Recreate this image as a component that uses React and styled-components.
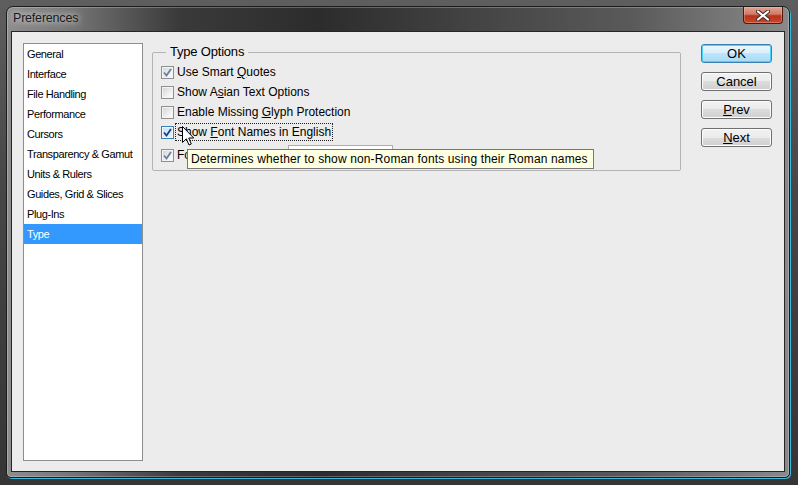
import React from "react";
import styled, { createGlobalStyle } from "styled-components";

const GlobalStyle = createGlobalStyle`
  body {
    margin: 0;
    background: #3c3c3c;
    font-family: "Liberation Sans", Arial, sans-serif;
  }
`;

const Screen = styled.div`
  width: 798px;
  height: 485px;
  box-sizing: border-box;
  padding: 6px 8px 7px 6px;
  background: linear-gradient(180deg, #5e5e5e 0%, #464646 40%, #353535 100%);
`;

const Window = styled.div`
  width: 784px;
  height: 472px;
  box-sizing: border-box;
  display: flex;
  flex-direction: column;
  border: 1px solid #1c1c1c;
  border-radius: 7px 7px 5px 5px;
  background: linear-gradient(
    90deg,
    #8e8e8e 0%,
    #767676 8%,
    #3a3a3a 22%,
    #2c2c2c 40%,
    #444 60%,
    #5a5a5a 80%,
    #7e7e7e 95%,
    #8a8a8a 100%
  );
  box-shadow: inset 0 0 0 1px rgba(255, 255, 255, 0.25), 1px 1px 0 #3cb8dc;
  overflow: hidden;
`;

const TitleBar = styled.div`
  height: 24px;
  display: flex;
  align-items: flex-start;
  padding-left: 6px;
  flex-shrink: 0;
`;

const Title = styled.div`
  font-size: 12.5px;
  letter-spacing: -0.2px;
  line-height: 22px;
  color: #1a1a1a;
  text-shadow: 0 0 6px rgba(230, 230, 230, 0.9), 0 0 10px rgba(220, 220, 220, 0.8);
`;

const CloseButton = styled.div`
  margin-left: auto;
  margin-right: 6px;
  width: 40px;
  height: 17px;
  box-sizing: border-box;
  border: 1px solid #4a1a10;
  border-top: none;
  border-radius: 0 0 4px 4px;
  background: linear-gradient(180deg, #e3a394 0%, #d27a64 45%, #b8321a 55%, #c9472a 100%);
  box-shadow: inset 0 0 0 1px rgba(255, 200, 180, 0.35);
  display: flex;
  align-items: center;
  justify-content: center;
`;

const Client = styled.div`
  flex: 1;
  margin: 0 4px 5px 4px;
  border: 1px solid #262626;
  background: #ececec;
  display: flex;
  align-items: flex-start;
  padding: 11px 12px 10px 11px;
  min-height: 0;
`;

const ListBox = styled.div`
  width: 120px;
  height: 418px;
  box-sizing: border-box;
  border: 1px solid #8e8e8e;
  background: #fff;
  flex-shrink: 0;
`;

const ListItem = styled.div`
  height: 20px;
  line-height: 20px;
  padding-left: 3px;
  font-size: 11px;
  letter-spacing: -0.4px;
  color: ${(p) => (p.selected ? "#fff" : "#000")};
  background: ${(p) => (p.selected ? "#3399ff" : "transparent")};
  white-space: nowrap;
`;

const Group = styled.fieldset`
  margin: 1px 0 0 9px;
  width: 529px;
  height: 127px;
  box-sizing: border-box;
  border: 1px solid #b4b4b4;
  border-radius: 2px;
  padding: 2px 0 0 8px;
  min-width: 0;
`;

const Legend = styled.legend`
  font-size: 13px;
  line-height: 16px;
  letter-spacing: -0.2px;
  padding: 0 4px;
  margin-left: 5px;
  color: #000;
`;

const Row = styled.div`
  position: relative;
  display: flex;
  align-items: center;
  height: 20px;
  margin-top: ${(p) => p.$gap || 0}px;
`;

const Box = styled.span`
  width: 13px;
  height: 13px;
  box-sizing: border-box;
  flex-shrink: 0;
  border: 1px solid ${(p) => (p.$hot ? "#3c7fb1" : "#8e8f8f")};
  background: ${(p) =>
    p.$hot
      ? "linear-gradient(135deg, #c2e4f6 0%, #e9f7fe 100%)"
      : "linear-gradient(135deg, #d2d2d2 0%, #f4f4f4 70%, #fff 100%)"};
  box-shadow: inset 0 0 0 1px #f4f4f4;
  display: flex;
  align-items: center;
  justify-content: center;
`;

const Label = styled.span`
  margin-left: 1px;
  padding: 0 1px;
  height: 16px;
  line-height: 16px;
  border: 1px dotted ${(p) => (p.$focus ? "#222" : "transparent")};
  font-size: 12px;
  color: #000;
  white-space: nowrap;
`;

const Key = styled.span`
  text-decoration: underline;
`;

const Select = styled.div`
  margin-left: 9px;
  width: 105px;
  height: 21px;
  box-sizing: border-box;
  border: 1px solid #abadb3;
  background: #fff;
`;

const Tooltip = styled.div`
  position: absolute;
  left: 26px;
  top: 4px;
  width: 407px;
  height: 20px;
  box-sizing: border-box;
  border: 1px solid #767676;
  background: #ffffe1;
  padding-left: 3px;
  font-size: 12px;
  letter-spacing: 0.14px;
  line-height: 18px;
  color: #000;
  white-space: nowrap;
  z-index: 2;
`;

const Cursor = styled.svg`
  position: absolute;
  left: 21px;
  top: 4px;
  z-index: 3;
`;

const Buttons = styled.div`
  margin: 1px 0 0 20px;
  display: flex;
  flex-direction: column;
  gap: 9px;
`;

const Button = styled.div`
  width: 71px;
  height: 19px;
  box-sizing: border-box;
  border: 1px solid ${(p) => (p.$default ? "#3c7fb1" : "#707070")};
  border-radius: 3px;
  background: ${(p) =>
    p.$default
      ? "linear-gradient(180deg, #eaf6fd 0%, #d9f0fc 50%, #bee6fd 50%, #a7d9f5 100%)"
      : "linear-gradient(180deg, #f2f2f2 0%, #ebebeb 50%, #dddddd 50%, #cfcfcf 100%)"};
  box-shadow: inset 0 0 0 1px ${(p) => (p.$default ? "#48d3ff" : "#fcfcfc")};
  font-size: 13px;
  line-height: 17px;
  text-align: center;
  color: #000;
`;

const Check = ({ dark }) => (
  <svg width="9" height="9" viewBox="0 0 9 9">
    <path
      d="M1 4.5 L3.5 7.5 L8 1"
      fill="none"
      stroke={dark ? "#1c3f8f" : "#6b7fa6"}
      strokeWidth="1.8"
    />
  </svg>
);

const categories = [
  "General",
  "Interface",
  "File Handling",
  "Performance",
  "Cursors",
  "Transparency & Gamut",
  "Units & Rulers",
  "Guides, Grid & Slices",
  "Plug-Ins",
  "Type",
];

export default function App() {
  return (
    <>
      <GlobalStyle />
      <Screen>
        <Window>
          <TitleBar>
            <Title>Preferences</Title>
            <CloseButton>
              <svg width="14" height="11" viewBox="0 0 14 11">
                <path
                  d="M2 1.5 L12 9.5 M12 1.5 L2 9.5"
                  stroke="#3a2a2a"
                  strokeWidth="4"
                  strokeLinecap="round"
                />
                <path
                  d="M2 1.5 L12 9.5 M12 1.5 L2 9.5"
                  stroke="#fff"
                  strokeWidth="2.2"
                  strokeLinecap="round"
                />
              </svg>
            </CloseButton>
          </TitleBar>
          <Client>
            <ListBox>
              {categories.map((c) => (
                <ListItem key={c} selected={c === "Type"}>
                  {c}
                </ListItem>
              ))}
            </ListBox>
            <Group>
              <Legend>Type Options</Legend>
              <Row>
                <Box>
                  <Check />
                </Box>
                <Label>
                  Use Smart <Key>Q</Key>uotes
                </Label>
              </Row>
              <Row>
                <Box />
                <Label>
                  Show A<Key>s</Key>ian Text Options
                </Label>
              </Row>
              <Row>
                <Box />
                <Label>
                  Enable Missing <Key>G</Key>lyph Protection
                </Label>
              </Row>
              <Row>
                <Box $hot>
                  <Check dark />
                </Box>
                <Label $focus>
                  Show <Key>F</Key>ont Names in English
                </Label>
                <Cursor width="13" height="21" viewBox="0 0 13 21">
                  <path
                    d="M0.5 0.5 L0.5 16.5 L4.3 12.8 L7 19 L9.3 18 L6.7 12 L11.7 12 Z"
                    fill="#fff"
                    stroke="#000"
                    strokeWidth="1"
                  />
                </Cursor>
              </Row>
              <Row $gap={3}>
                <Box>
                  <Check />
                </Box>
                <Label>Font Preview Size:</Label>
                <Select />
                <Tooltip>
                  Determines whether to show non-Roman fonts using their Roman names
                </Tooltip>
              </Row>
            </Group>
            <Buttons>
              <Button $default>OK</Button>
              <Button>Cancel</Button>
              <Button>
                <Key>P</Key>rev
              </Button>
              <Button>
                <Key>N</Key>ext
              </Button>
            </Buttons>
          </Client>
        </Window>
      </Screen>
    </>
  );
}
